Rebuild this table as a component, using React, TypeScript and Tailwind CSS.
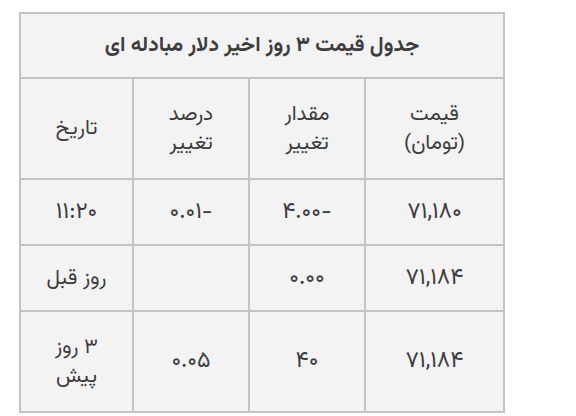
const rows = [
  { price: '۷۱,۱۸۰', amount: '-۴.۰۰', percent: '-۰.۰۱', date: '۱۱:۲۰' },
  { price: '۷۱,۱۸۴', amount: '۰.۰۰', percent: '', date: 'روز قبل' },
  { price: '۷۱,۱۸۴', amount: '۴۰', percent: '۰.۰۵', date: '۳ روز پیش' },
]

const cell = 'border-2 border-[#c4c4c4] text-center'
const num = 'border-2 border-[#c4c4c4] text-center text-[23px]'

export default function App() {
  return (
    <div className="min-h-screen bg-white pt-3 pl-[19px] font-[Vazirmatn,sans-serif]">
      <table dir="rtl" className="w-[486px] border-collapse bg-[#f3f3f3] text-[#3d3d3d]">
        <thead>
          <tr>
            <th colSpan={4} className="h-[65px] border-2 border-[#c4c4c4] text-[21px] font-bold">
              جدول قیمت ۳ روز اخیر دلار مبادله ای
            </th>
          </tr>
        </thead>
        <tbody className="text-[21px] leading-[29px]">
          <tr className="h-[101px]">
            <td className={`w-[139px] ${cell}`}>
              قیمت
              <br />
              (تومان)
            </td>
            <td className={`w-[116px] ${cell}`}>
              مقدار
              <br />
              تغییر
            </td>
            <td className={`w-[116px] ${cell}`}>
              درصد
              <br />
              تغییر
            </td>
            <td className={cell}>تاریخ</td>
          </tr>
          {rows.map((r, i) => (
            <tr key={i} className={i === 2 ? 'h-[101px]' : 'h-[66px]'}>
              <td className={num}>{r.price}</td>
              <td className={num}>{r.amount}</td>
              <td className={num}>{r.percent}</td>
              {i === 0 ? (
                <td className={num}>{r.date}</td>
              ) : i === 2 ? (
                <td className={cell}>
                  ۳ روز
                  <br />
                  پیش
                </td>
              ) : (
                <td className={`${cell} px-4`}>{r.date}</td>
              )}
            </tr>
          ))}
        </tbody>
      </table>
    </div>
  )
}
